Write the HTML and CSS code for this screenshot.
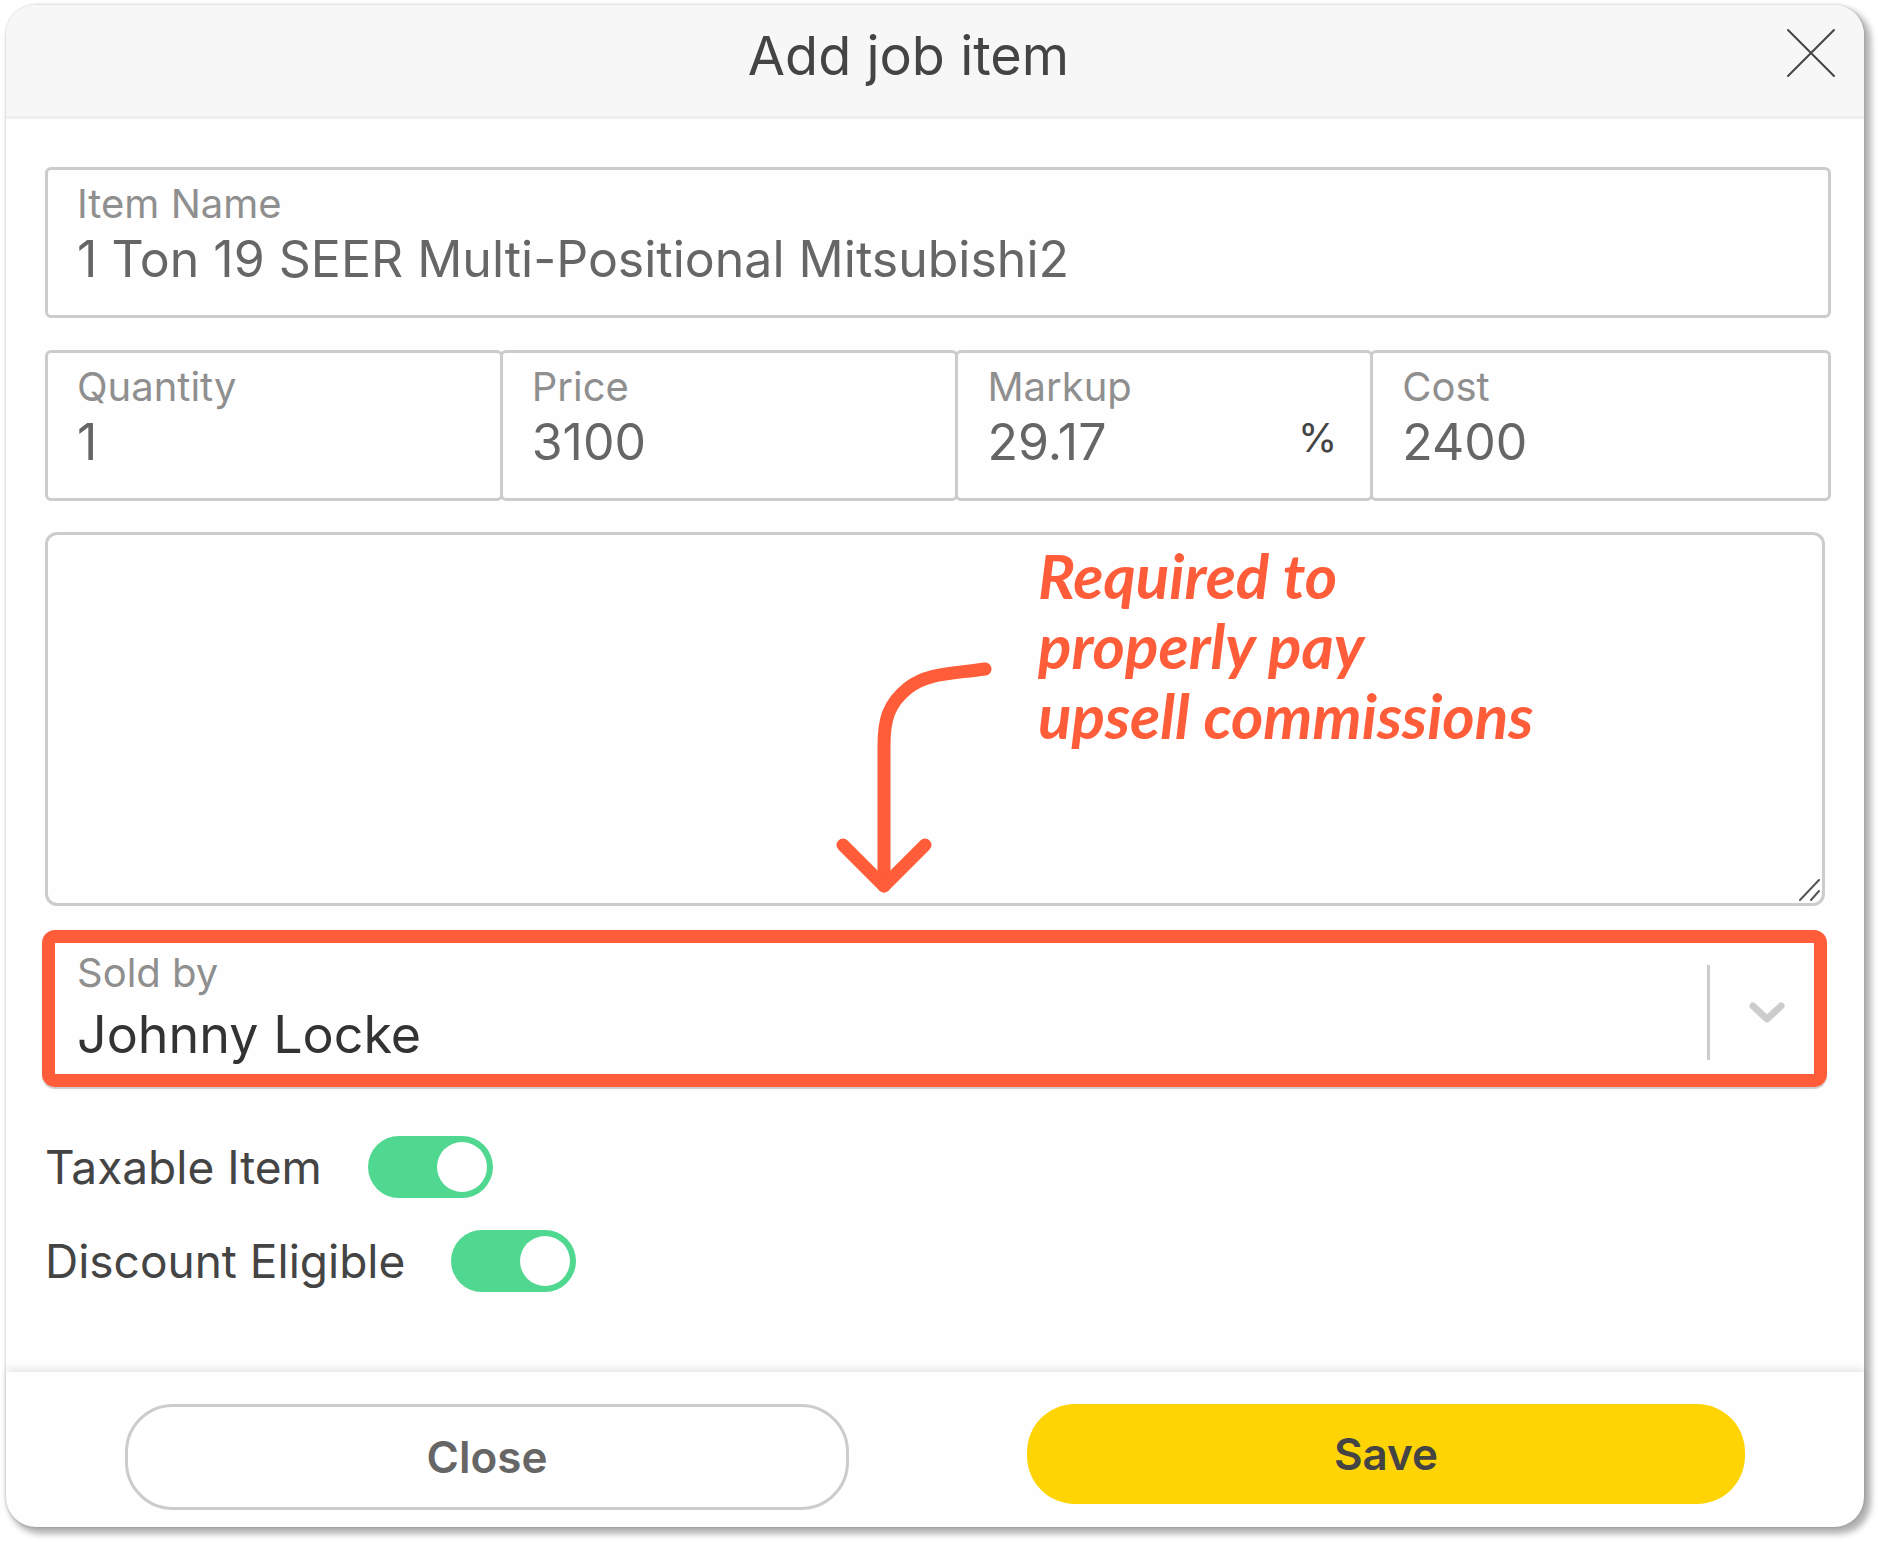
FILE: index.html
```html
<!DOCTYPE html>
<html lang="en">
<head>
    <meta charset="UTF-8">
    <meta name="viewport" content="width=device-width, initial-scale=1.0">
    <title>Add job item</title>
    <link rel="stylesheet" href="styles.css">
</head>
<body>

    <form class="modal">
        <div class="modal-header">
            <h1>Add job item</h1>
            <button type="button" class="close-icon" aria-label="Close dialog">
                <svg viewBox="0 0 52 52" width="52" height="52"><path d="M3 3L49 49M49 3L3 49"/></svg>
            </button>
        </div>

        <div class="modal-body">
            <div class="field">
                <label for="itemName">Item Name</label>
                <input type="text" id="itemName" value="1 Ton 19 SEER Multi-Positional Mitsubishi2">
            </div>

            <div class="field-row">
                <div class="field">
                    <label for="quantity">Quantity</label>
                    <input type="text" id="quantity" value="1">
                </div>
                <div class="field">
                    <label for="price">Price</label>
                    <input type="text" id="price" value="3100">
                </div>
                <div class="field">
                    <label for="markup">Markup</label>
                    <input type="text" id="markup" value="29.17">
                    <span class="unit">%</span>
                </div>
                <div class="field">
                    <label for="cost">Cost</label>
                    <input type="text" id="cost" value="2400">
                </div>
            </div>

            <div class="notes">
                <textarea aria-label="Description"></textarea>
                <svg class="grip" viewBox="0 0 22 24" width="22" height="24"><path d="M1 22L20 2M12 22L20 13"/></svg>
                <svg class="arrow" viewBox="0 0 160 234" width="160" height="234">
                    <path d="M149 9C114 14 91 13 72 28C52 44 48 60 48 86V226"/>
                    <path d="M7 185L48 226L89 185"/>
                </svg>
                <p class="hint">Required to<br>properly pay<br>upsell commissions</p>
            </div>

            <div class="sold-by">
                <div class="sold-by-value">
                    <label for="soldBy">Sold by</label>
                    <select id="soldBy">
                        <option>Johnny Locke</option>
                    </select>
                </div>
                <svg class="chevron" viewBox="0 0 38 24" width="38" height="24"><path d="M5 5L19 18L33 5"/></svg>
            </div>

            <div class="toggle">
                <label for="taxable">Taxable Item</label>
                <input type="checkbox" id="taxable" checked>
            </div>
            <div class="toggle">
                <label for="discount">Discount Eligible</label>
                <input type="checkbox" id="discount" checked>
            </div>
        </div>

        <div class="modal-footer">
            <button type="button" class="btn btn-close">Close</button>
            <button type="submit" class="btn btn-save">Save</button>
        </div>
    </form>

</body>
</html>
```
FILE: styles.css
```css
* {
    box-sizing: border-box;
}
body {
    margin: 0;
    padding: 5px 14px 15px 6px;
    background-color: white;
    font-family: Inter, sans-serif;
    color: #444;
}
input, select, textarea, button {
    font-family: inherit;
}
svg {
    fill: none;
    stroke-linecap: round;
    stroke-linejoin: round;
}
.modal {
    background-color: #fefefe;
    border-radius: 30px;
    box-shadow: 5px 5px 6px 2px rgba(0, 0, 0, 0.3), 0 0 3px rgba(0, 0, 0, 0.2);
}
.modal-header {
    display: flex;
    align-items: flex-start;
    height: 114px;
    padding: 22px 27px 0 26px;
    background-color: #f7f7f7;
    border-bottom: 3px solid #efefef;
    border-radius: 30px 30px 0 0;
}
.modal-header h1 {
    flex: 1;
    margin: 0;
    font-size: 54px;
    line-height: 58px;
    font-weight: 400;
    text-align: center;
}
.close-icon {
    padding: 0;
    border: none;
    background: none;
    cursor: pointer;
}
.close-icon svg {
    display: block;
    stroke: #444;
    stroke-width: 2;
}
.modal-body {
    padding: 48px 33px 48px 39px;
}
.field {
    position: relative;
    height: 151px;
    padding: 12px 20px 0 29px;
    border: 3px solid #ccc;
    border-radius: 6px;
}
.field label, .sold-by label {
    display: block;
    font-size: 40px;
    line-height: 44px;
    color: #8f8f8f;
}
.field input {
    display: block;
    width: 100%;
    height: 66px;
    padding: 0;
    border: none;
    outline: none;
    background: none;
    font-size: 50px;
    color: #666;
}
.field-row {
    display: grid;
    grid-template-columns: 458fr 456fr 415fr 458fr;
    margin: 32px 0 31px;
}
.field-row .field + .field {
    margin-left: -3px;
}
.unit {
    position: absolute;
    right: 33px;
    bottom: 38px;
    font-size: 40px;
    line-height: 44px;
}
.notes {
    position: relative;
    margin-right: 6px;
}
.notes textarea {
    display: block;
    width: 100%;
    height: 374px;
    border: 3px solid #ccc;
    border-radius: 12px;
    background: none;
    resize: none;
}
.grip {
    position: absolute;
    right: 4px;
    bottom: 4px;
    stroke: #555;
    stroke-width: 2;
}
.arrow {
    position: absolute;
    left: 791px;
    top: 128px;
    stroke: #ff5c39;
    stroke-width: 13;
}
.hint {
    position: absolute;
    left: 993px;
    top: 8px;
    margin: 0;
    font-family: Lato, sans-serif;
    font-size: 62px;
    line-height: 70px;
    font-weight: 700;
    font-style: italic;
    color: #ff5c39;
}
.sold-by {
    display: flex;
    align-items: center;
    height: 157px;
    margin: 24px 4px 49px -3px;
    padding-top: 7px;
    border: 13px solid #ff5c39;
    border-radius: 13px;
    box-shadow: 0 2px 1px #ccc;
}
.sold-by-value {
    flex: 1;
    padding-left: 22px;
}
.sold-by select {
    display: block;
    width: 100%;
    height: 78px;
    padding: 0;
    border: none;
    outline: none;
    background: none;
    appearance: none;
    font-size: 52px;
    color: #333;
}
.chevron {
    box-sizing: content-box;
    padding: 36px 28px 35px 38px;
    border-left: 3px solid #ccc;
    stroke: #ccc;
    stroke-width: 7;
}
.toggle {
    display: flex;
    align-items: center;
    gap: 46px;
    margin-bottom: 32px;
    font-size: 46px;
    line-height: 62px;
}
.toggle input {
    width: 125px;
    height: 62px;
    margin: 0;
    padding: 6px;
    border-radius: 31px;
    background-color: #50d790;
    appearance: none;
    cursor: pointer;
}
.toggle input::before {
    content: "";
    display: block;
    width: 50px;
    height: 50px;
    margin-left: auto;
    border-radius: 50%;
    background-color: white;
}
.modal-footer {
    display: grid;
    grid-template-columns: 724fr 718fr;
    align-items: start;
    gap: 178px;
    padding: 32px 119px 17px;
    border-radius: 0 0 30px 30px;
    box-shadow: 0 -3px 8px rgba(0, 0, 0, 0.1);
}
.btn {
    height: 100px;
    padding: 0;
    border: none;
    border-radius: 48px;
    font-size: 44px;
    font-weight: 600;
    cursor: pointer;
}
.btn-close {
    height: 106px;
    border: 3px solid #ccc;
    background-color: white;
    color: #666;
}
.btn-save {
    background-color: #ffd405;
    color: #444;
}
```
